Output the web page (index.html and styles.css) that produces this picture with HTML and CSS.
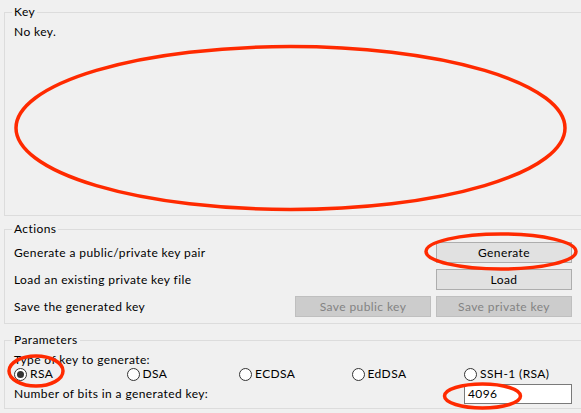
FILE: index.html
```html
<!DOCTYPE html>
<html>
<head>
<meta charset="utf-8">
<link rel="stylesheet" href="styles.css">
</head>
<body>
<div class="window">
  <fieldset class="group key">
    <legend>Key</legend>
    <div class="key-area">No key.</div>
  </fieldset>

  <fieldset class="group actions">
    <legend>Actions</legend>
    <div class="action-grid">
      <span class="lbl">Generate a public/private key pair</span>
      <button class="btn col-b">Generate</button>
      <span class="lbl">Load an existing private key file</span>
      <button class="btn col-b">Load</button>
      <span class="lbl">Save the generated key</span>
      <button class="btn disabled col-a">Save public key</button>
      <button class="btn disabled col-b">Save private key</button>
    </div>
  </fieldset>

  <fieldset class="group params">
    <legend>Parameters</legend>
    <div class="type-label">Type of key to generate:</div>
    <div class="radios">
      <label class="radio"><span class="dot checked"></span>RSA</label>
      <label class="radio"><span class="dot"></span>DSA</label>
      <label class="radio"><span class="dot"></span>ECDSA</label>
      <label class="radio"><span class="dot"></span>EdDSA</label>
      <label class="radio"><span class="dot"></span>SSH-1 (RSA)</label>
    </div>
    <div class="bits-row">
      <span class="lbl">Number of bits in a generated key:</span>
      <span class="input">4096</span>
    </div>
  </fieldset>

  <svg class="annot" width="581" height="413" viewBox="0 0 581 413">
    <ellipse cx="290.5" cy="128" rx="274.5" ry="81.5" />
    <ellipse cx="501" cy="251.5" rx="75" ry="17.5" />
    <ellipse cx="36" cy="371" rx="27" ry="15" />
    <ellipse cx="482.5" cy="396" rx="38" ry="12" />
  </svg>
</div>
</body>
</html>
```

FILE: styles.css
```css
html, body {
  margin: 0;
  padding: 0;
  background: #f0f0f0;
  overflow: hidden;
}

.window {
  position: relative;
  width: 600px;
  height: 413px;
  padding-top: 4px;
  box-sizing: border-box;
  font-family: Lato, "Liberation Sans", sans-serif;
  font-size: 12px;
  letter-spacing: 0.4px;
  line-height: 16px;
  color: #000;
}

.group {
  margin: 0 0 0 4px;
  border: 1px solid #dcdcdc;
  padding: 0 27px 0 9px;
  min-width: 0;
}

.group legend {
  padding: 0 2px;
  margin-left: -2px;
  line-height: 16px;
}

.key .key-area {
  height: 195px;
  padding-top: 4px;
  box-sizing: border-box;
}

.actions {
  margin-top: 5px;
  padding-top: 5px;
  padding-bottom: 6px;
}

.action-grid {
  display: grid;
  grid-template-columns: 1fr 136px 136px;
  column-gap: 5px;
  row-gap: 6px;
  align-items: center;
}

.action-grid .lbl {
  grid-column: 1;
}

.col-a { grid-column: 2; }
.col-b { grid-column: 3; }

.btn {
  height: 21px;
  margin: 0;
  padding: 0;
  border: 1px solid #adadad;
  background: #e1e1e1;
  font: inherit;
  letter-spacing: inherit;
  color: #000;
}

.btn.disabled {
  background: #cccccc;
  border-color: #bfbfbf;
  color: #838383;
}

.params {
  margin-top: 8px;
  padding-top: 4px;
  padding-bottom: 4px;
}

.radios {
  display: flex;
  margin-top: -2px;
}

.radio {
  width: 112.5px;
  display: flex;
  align-items: center;
  gap: 3px;
  flex-shrink: 0;
}

.dot {
  width: 13px;
  height: 13px;
  box-sizing: border-box;
  border: 1px solid #333;
  border-radius: 50%;
  background: #fff;
  display: flex;
  align-items: center;
  justify-content: center;
}

.dot.checked::after {
  content: "";
  width: 7px;
  height: 7px;
  border-radius: 50%;
  background: #333;
}

.bits-row {
  display: flex;
  justify-content: space-between;
  align-items: center;
  margin-top: 2px;
}

.input {
  width: 108px;
  height: 20px;
  box-sizing: border-box;
  border: 1px solid #7a7a7a;
  background: #fff;
  padding: 1px 3px;
  line-height: 16px;
}

.annot {
  position: absolute;
  left: 0;
  top: 0;
  pointer-events: none;
}

.annot ellipse {
  fill: none;
  stroke: #ff2a00;
  stroke-width: 3.5;
}
```
